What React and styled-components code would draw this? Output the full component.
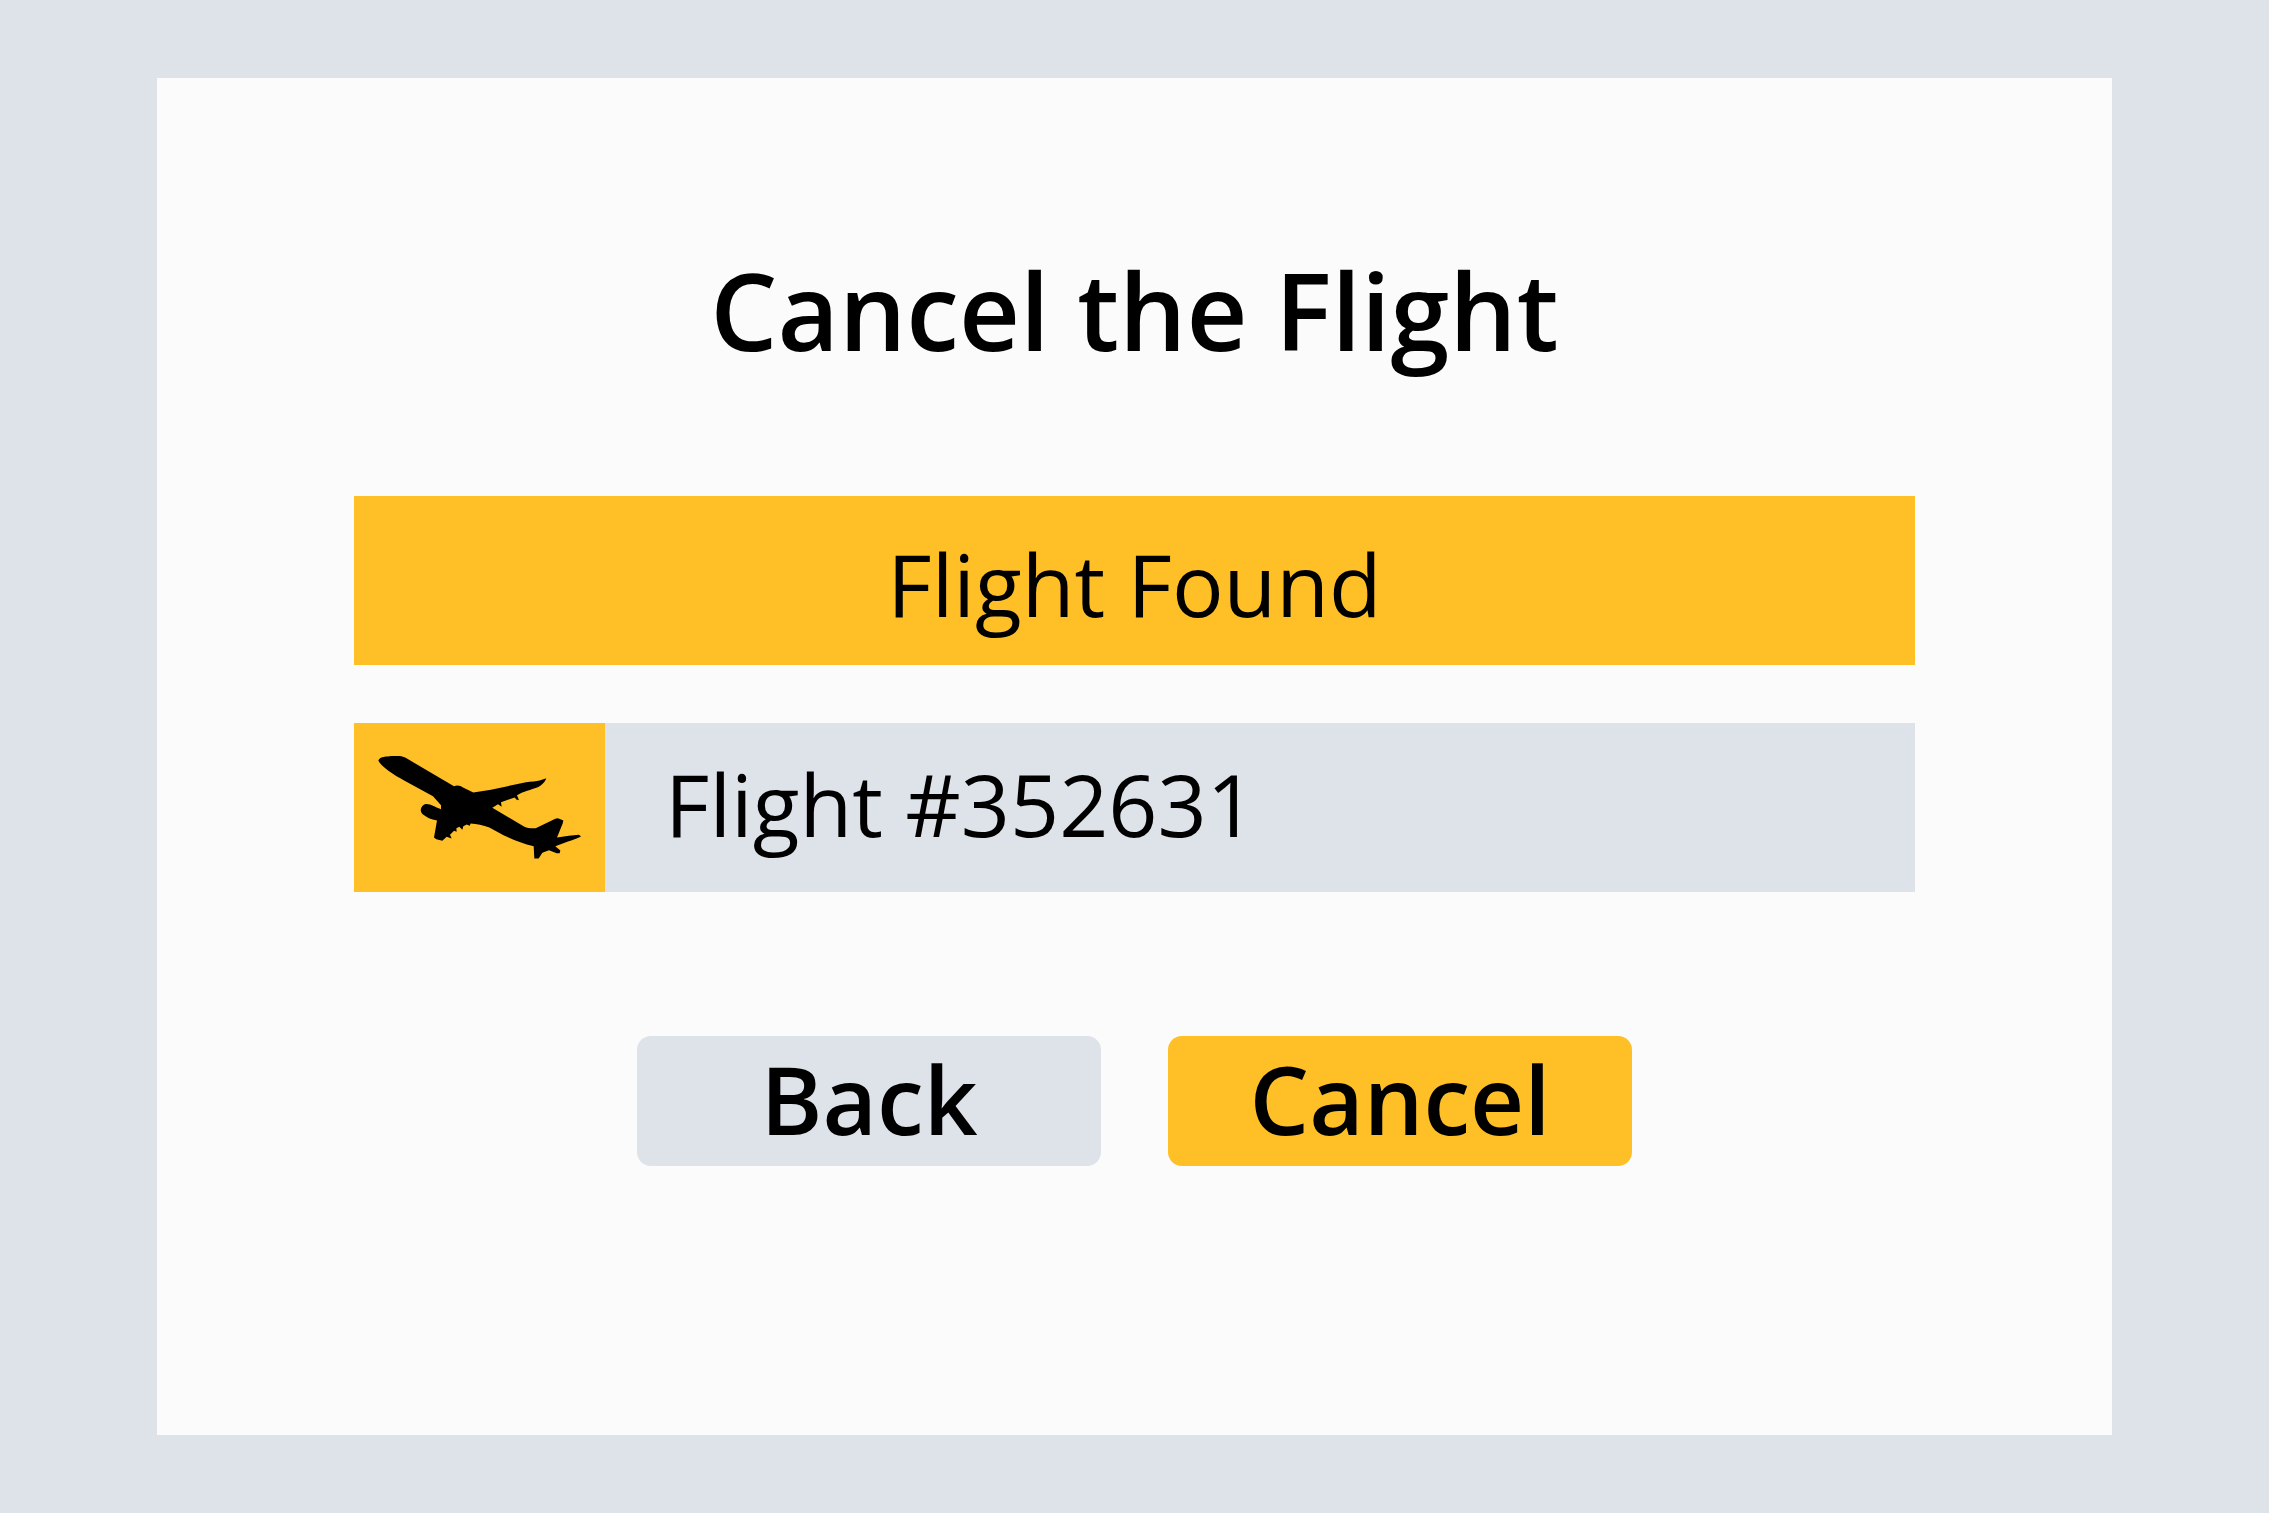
import React from "react";
import styled, { createGlobalStyle, css } from "styled-components";

const GlobalStyle = createGlobalStyle`
  * {
    box-sizing: border-box;
  }

  body {
    margin: 0;
    background: #dee2e9;
    color: #000;
    font-family: "Open Sans", "Noto Sans", sans-serif;
  }
`;

const Page = styled.div`
  display: flex;
  min-height: 100vh;
  padding: 78px 157px;
`;

const Panel = styled.main`
  flex: 1;
  display: flex;
  flex-direction: column;
  padding: 160px 197px 80px;
  background: #fbfbfb;
`;

const Title = styled.h1`
  margin: 0 0 114px;
  font-size: 106px;
  font-weight: 600;
  line-height: 144px;
  text-align: center;
`;

const Banner = styled.div`
  padding: 28px 0 21px;
  background: #ffbf27;
  font-size: 86px;
  line-height: 120px;
  text-align: center;
`;

const FlightRow = styled.div`
  display: flex;
  margin-top: 58px;
  background: #dee2e9;
`;

const IconCell = styled.div`
  display: flex;
  align-items: center;
  justify-content: center;
  width: 251px;
  background: #ffbf27;
`;

const FlightNumber = styled.div`
  flex: 1;
  padding: 21px 60px 28px;
  font-size: 86px;
  line-height: 120px;
`;

const Actions = styled.div`
  display: flex;
  justify-content: center;
  gap: 67px;
  margin-top: 144px;
`;

const Button = styled.button`
  width: 464px;
  height: 130px;
  padding: 0 0 4px;
  border: 0;
  border-radius: 14px;
  background: #dee2e9;
  color: inherit;
  font-family: inherit;
  font-size: 94px;
  font-weight: 600;
  line-height: 126px;
  cursor: pointer;

  ${props =>
    props.$primary &&
    css`
      background: #ffbf27;
    `}
`;

const Plane = () => (
  <svg width="203" height="104" viewBox="113 135 609 311" aria-hidden="true">
    <path
      d="M114 148C118 138 130 136 148 135C170 133 187 134 196 140L341 225
      C351 221 362 224 368 229L399 244L452 236L557 213C573 211 588 211 598 208
      L618 201C615 209 609 217 602 222C588 232 567 235 544 245L530 252
      L536 267L528 265L523 259L482 273L484 287L473 279L456 290
      L551 346C564 352 575 352 586 351L645 323Q651 320 657 323L669 328L667 337
      L650 379L686 374L716 371L722 376C710 382 696 387 683 391L645 405
      L660 418L658 426L649 426L626 417L606 425L595 442L582 442L580 405
      C547 398 520 386 491 373L447 349C429 343 409 338 391 337L388 344
      L379 340L369 345L366 356L357 347L348 351L349 362L341 359L329 371
      L334 382L319 377L306 389L288 384L281 379L290 328
      C272 325 258 318 247 309C237 300 241 286 252 280C267 275 279 287 302 294
      L302 282L278 255L190 207C157 190 122 165 114 148Z"
      fill="#000"
    />
  </svg>
);

const App = () => (
  <>
    <GlobalStyle />
    <Page>
      <Panel>
        <Title>Cancel the Flight</Title>
        <Banner role="status">Flight Found</Banner>
        <FlightRow>
          <IconCell>
            <Plane />
          </IconCell>
          <FlightNumber>Flight #352631</FlightNumber>
        </FlightRow>
        <Actions>
          <Button type="button">Back</Button>
          <Button type="button" $primary>
            Cancel
          </Button>
        </Actions>
      </Panel>
    </Page>
  </>
);

export default App;
